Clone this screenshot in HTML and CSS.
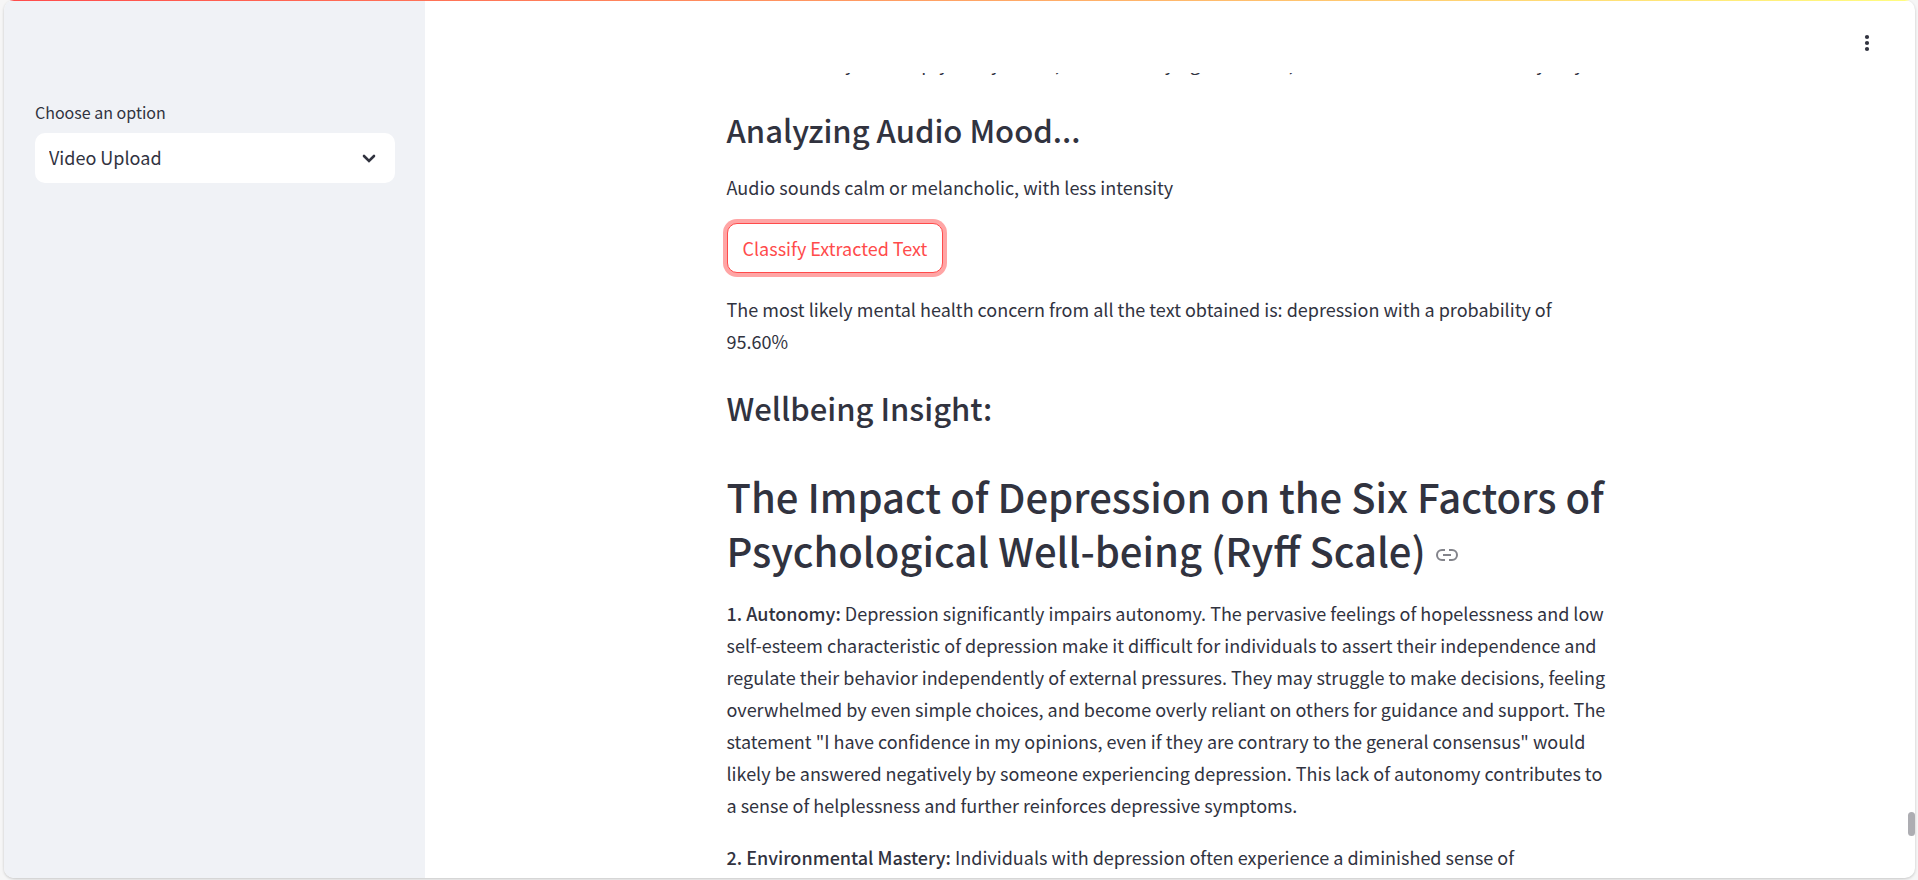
FILE: index.html
```html
<!DOCTYPE html>
<html lang="en">
<head>
<meta charset="utf-8">
<title>Wellbeing Insight</title>
<link rel="stylesheet" href="styles.css">
</head>
<body>
<div class="app">
  <div class="decoration"></div>
  <aside class="sidebar">
    <label class="field-label" for="mode">Choose an option</label>
    <div class="select">
      <select id="mode" class="select-input">
        <option>Video Upload</option>
      </select>
      <svg class="select-arrow" viewBox="0 0 14 9" aria-hidden="true"><path d="M2 2l5 5 5-5"/></svg>
    </div>
  </aside>
  <div class="main">
    <header class="toolbar">
      <button class="menu" type="button" aria-label="Menu">
        <svg class="menu-icon" viewBox="0 0 24 24" aria-hidden="true"><circle cx="12" cy="6" r="2.1"/><circle cx="12" cy="12" r="2.1"/><circle cx="12" cy="18" r="2.1"/></svg>
      </button>
    </header>
    <main class="viewport">
      <div class="content">
        <p class="text">She is so lonely and empty today inside, he is here crying at the end, and I do not see how to fix my way</p>
        <h2 class="subheading">Analyzing Audio Mood...</h2>
        <p class="text">Audio sounds calm or melancholic, with less intensity</p>
        <button class="action" type="button">Classify Extracted Text</button>
        <p class="text">The most likely mental health concern from all the text obtained is: depression with a probability of 95.60%</p>
        <h2 class="subheading">Wellbeing Insight:</h2>
        <h1 class="heading" id="ryff">The Impact of Depression on the Six Factors of Psychological Well-being (Ryff Scale) <a class="anchor" href="#ryff" aria-label="Link to heading"><svg class="anchor-icon" viewBox="0 0 24 24" aria-hidden="true"><path d="M10 7H7a5 5 0 0 0 0 10h3M14 7h3a5 5 0 0 1 0 10h-3M8 12h8"/></svg></a></h1>
        <p class="text"><strong>1. Autonomy:</strong> Depression significantly impairs autonomy. The pervasive feelings of hopelessness and low self-esteem characteristic of depression make it difficult for individuals to assert their independence and regulate their behavior independently of external pressures. They may struggle to make decisions, feeling overwhelmed by even simple choices, and become overly reliant on others for guidance and support. The statement "I have confidence in my opinions, even if they are contrary to the general consensus" would likely be answered negatively by someone experiencing depression. This lack of autonomy contributes to a sense of helplessness and further reinforces depressive symptoms.</p>
        <p class="text"><strong>2. Environmental Mastery:</strong> Individuals with depression often experience a diminished sense of</p>
      </div>
      <div class="scroll-thumb"></div>
    </main>
  </div>
</div>
</body>
</html>
```
FILE: styles.css
```css
* {
  box-sizing: border-box;
}

body {
  margin: 0;
  height: 100vh;
  padding: 0 3px 2px 4px;
  overflow: hidden;
  background: #f6f6f6;
  color: #31333f;
  font-family: "Noto Sans CJK SC", "Noto Sans", sans-serif;
  font-size: 18px;
  line-height: 32px;
}

.app {
  position: relative;
  display: flex;
  height: 100%;
  overflow: hidden;
  background: #ffffff;
  border-radius: 10px;
  box-shadow: 0 1px 3px rgba(0, 0, 0, 0.2);
}

.decoration {
  position: absolute;
  inset: 0 0 auto 0;
  height: 1px;
  background: linear-gradient(90deg, #ff4b4b, #fffd80);
}

.sidebar {
  flex: 0 0 421px;
  padding: 99px 30px 20px 31px;
  background: #f0f2f6;
}

.field-label {
  display: block;
  margin-bottom: 7px;
  font-size: 16px;
  line-height: 27px;
}

.select {
  position: relative;
}

.select-input {
  display: block;
  width: 100%;
  height: 50px;
  padding: 0 44px 2px 14px;
  border: 0;
  border-radius: 10px;
  background: #ffffff;
  color: inherit;
  font: inherit;
  appearance: none;
}

.select-arrow {
  position: absolute;
  top: 21px;
  right: 19px;
  width: 14px;
  height: 9px;
  fill: none;
  stroke: #31333f;
  stroke-width: 2.6;
  stroke-linecap: round;
  pointer-events: none;
}

.main {
  display: flex;
  flex: 1;
  flex-direction: column;
  min-width: 0;
}

.toolbar {
  display: flex;
  flex: 0 0 73px;
  align-items: flex-start;
  justify-content: flex-end;
  padding: 27px 32px 0;
}

.menu {
  display: flex;
  padding: 4px;
  border: 0;
  background: none;
}

.menu-icon {
  width: 24px;
  height: 24px;
  fill: #31333f;
}

.viewport {
  position: relative;
  flex: 1;
  min-height: 0;
  overflow: hidden;
}

.content {
  max-width: 887px;
  margin: -26px auto 0;
}

.text {
  margin: 0 0 20px;
}

.text strong {
  font-weight: 500;
}

.subheading {
  margin: 30px 0 20px;
  font-size: 31px;
  font-weight: 500;
  line-height: 42px;
}

.heading {
  margin: 40px 0 20px;
  font-size: 40px;
  font-weight: 500;
  line-height: 54px;
}

.anchor {
  display: inline-block;
  line-height: 0;
}

.anchor-icon {
  width: 24px;
  height: 24px;
  fill: none;
  stroke: #31333f;
  stroke-width: 2;
  opacity: 0.6;
}

.action {
  display: block;
  height: 50px;
  margin: 0 0 20px;
  padding: 0 15px;
  border: 1px solid #ff4b4b;
  border-radius: 10px;
  background: #ffffff;
  box-shadow: 0 0 0 4px rgba(255, 75, 75, 0.5);
  color: #ff4b4b;
  font: inherit;
}

.scroll-thumb {
  position: absolute;
  top: 739px;
  right: 0;
  width: 7px;
  height: 24px;
  border-radius: 4px;
  background: #adadb2;
}
```
